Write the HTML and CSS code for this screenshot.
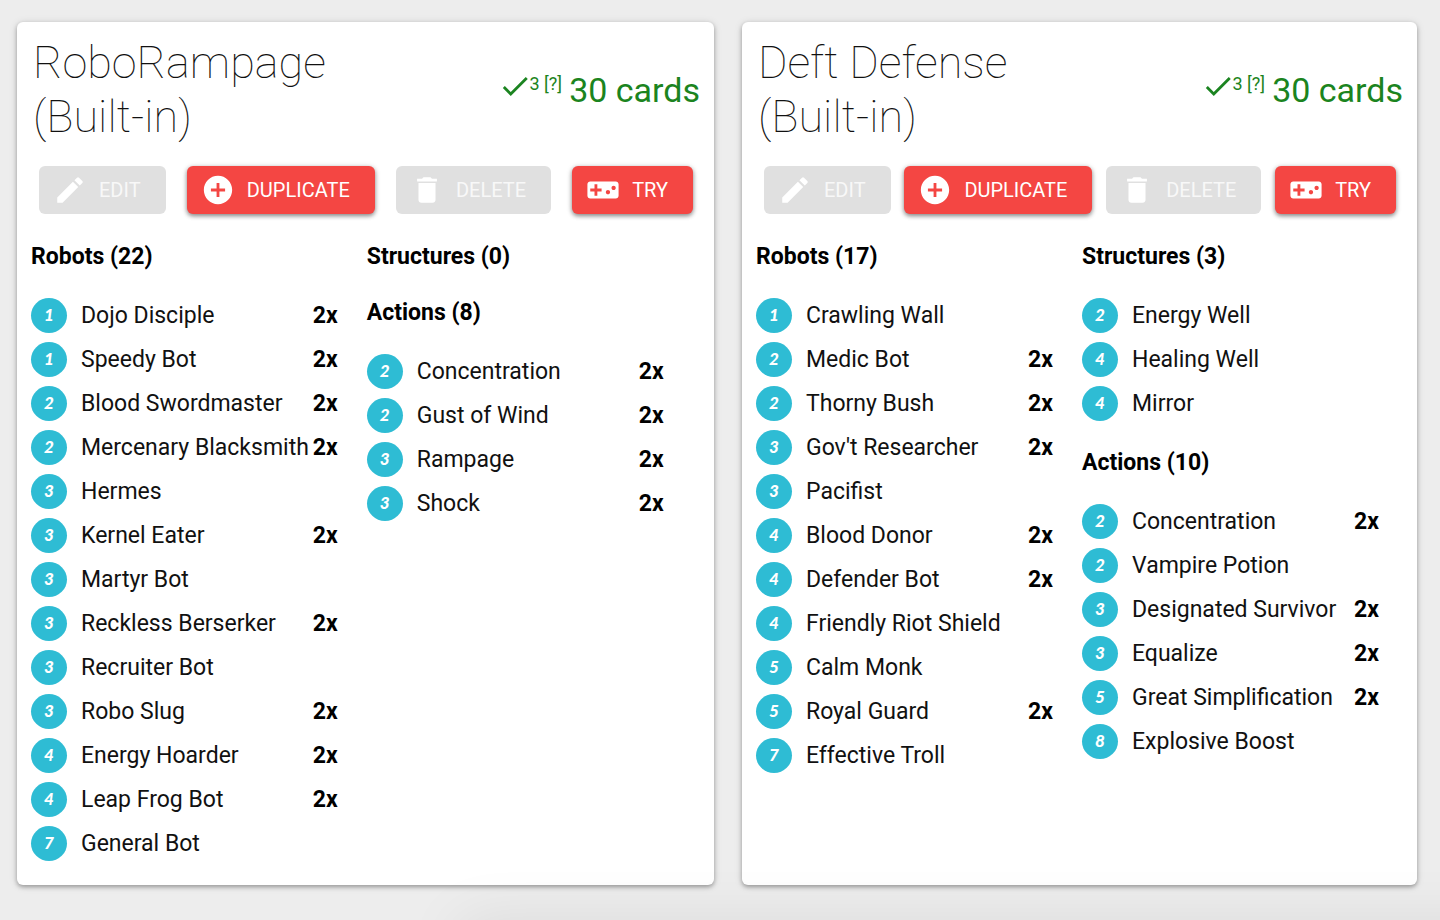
FILE: index.html
```
<!DOCTYPE html>
<html lang="en">
<head>
<meta charset="utf-8">
<title>Decks</title>
<link rel="stylesheet" href="styles.css">
</head>
<body>
<svg class="sprite" aria-hidden="true">
  <symbol id="i-edit" viewBox="0 0 24 24"><path d="M3 17.25V21h3.750L17.810 9.940l-3.750-3.750L3 17.250zM20.710 7.040a.996.996 0 0 0 0-1.410l-2.340-2.340a.996.996 0 0 0-1.410 0l-1.830 1.830 3.750 3.750 1.830-1.830z"/></symbol>
  <symbol id="i-add" viewBox="0 0 24 24"><path d="M12 2C6.480 2 2 6.480 2 12s4.480 10 10 10 10-4.480 10-10S17.520 2 12 2zm5 11h-4v4h-2v-4H7v-2h4V7h2v4h4v2z"/></symbol>
  <symbol id="i-delete" viewBox="0 0 24 24"><path d="M6 19c0 1.100.9 2 2 2h8c1.100 0 2-.9 2-2V7H6v12zM19 4h-3.500l-1-1h-5l-1 1H5v2h14V4z"/></symbol>
  <symbol id="i-game" viewBox="0 0 24 24"><path d="M21 6H3c-1.100 0-2 .9-2 2v8c0 1.100.9 2 2 2h18c1.100 0 2-.9 2-2V8c0-1.100-.9-2-2-2zm-10 7H8v3H6v-3H3v-2h3V8h2v3h3v2zm4.500 2c-.83 0-1.500-.67-1.500-1.500s.67-1.500 1.500-1.500 1.500.67 1.500 1.500-.67 1.500-1.500 1.500zm4-3c-.83 0-1.500-.67-1.500-1.500S18.670 9 19.500 9s1.500.67 1.500 1.500-.67 1.500-1.500 1.500z"/></symbol>
  <symbol id="i-check" viewBox="0 0 24 24"><path d="M9 16.170L4.830 12l-1.420 1.410L9 19 21 7l-1.410-1.410z"/></symbol>
</svg>
<main class="decks">
  <article class="deck">
    <header class="deck-head">
      <h2 class="deck-title">RoboRampage (Built-in)</h2>
      <div class="deck-status"><svg class="check"><use href="#i-check"/></svg><span class="formats">3 [?]</span><span class="total">30 cards</span></div>
    </header>
    <div class="actions">
      <button class="btn" type="button" disabled><svg class="icon"><use href="#i-edit"/></svg>EDIT</button>
      <button class="btn" type="button"><svg class="icon"><use href="#i-add"/></svg>DUPLICATE</button>
      <button class="btn" type="button" disabled><svg class="icon"><use href="#i-delete"/></svg>DELETE</button>
      <button class="btn" type="button"><svg class="icon"><use href="#i-game"/></svg>TRY</button>
    </div>
    <div class="columns">
      <div class="column">
        <section class="group">
          <h3 class="group-title">Robots (22)</h3>
          <table class="cards">
            <tr><td class="cost"><span class="badge">1</span></td><td class="name">Dojo Disciple</td><td class="count">2x</td></tr>
            <tr><td class="cost"><span class="badge">1</span></td><td class="name">Speedy Bot</td><td class="count">2x</td></tr>
            <tr><td class="cost"><span class="badge">2</span></td><td class="name">Blood Swordmaster</td><td class="count">2x</td></tr>
            <tr><td class="cost"><span class="badge">2</span></td><td class="name">Mercenary Blacksmith</td><td class="count">2x</td></tr>
            <tr><td class="cost"><span class="badge">3</span></td><td class="name">Hermes</td><td class="count"></td></tr>
            <tr><td class="cost"><span class="badge">3</span></td><td class="name">Kernel Eater</td><td class="count">2x</td></tr>
            <tr><td class="cost"><span class="badge">3</span></td><td class="name">Martyr Bot</td><td class="count"></td></tr>
            <tr><td class="cost"><span class="badge">3</span></td><td class="name">Reckless Berserker</td><td class="count">2x</td></tr>
            <tr><td class="cost"><span class="badge">3</span></td><td class="name">Recruiter Bot</td><td class="count"></td></tr>
            <tr><td class="cost"><span class="badge">3</span></td><td class="name">Robo Slug</td><td class="count">2x</td></tr>
            <tr><td class="cost"><span class="badge">4</span></td><td class="name">Energy Hoarder</td><td class="count">2x</td></tr>
            <tr><td class="cost"><span class="badge">4</span></td><td class="name">Leap Frog Bot</td><td class="count">2x</td></tr>
            <tr><td class="cost"><span class="badge">7</span></td><td class="name">General Bot</td><td class="count"></td></tr>
          </table>
        </section>
      </div>
      <div class="column">
        <section class="group group-empty">
          <h3 class="group-title">Structures (0)</h3>
        </section>
        <section class="group">
          <h3 class="group-title">Actions (8)</h3>
          <table class="cards">
            <tr><td class="cost"><span class="badge">2</span></td><td class="name">Concentration</td><td class="count">2x</td></tr>
            <tr><td class="cost"><span class="badge">2</span></td><td class="name">Gust of Wind</td><td class="count">2x</td></tr>
            <tr><td class="cost"><span class="badge">3</span></td><td class="name">Rampage</td><td class="count">2x</td></tr>
            <tr><td class="cost"><span class="badge">3</span></td><td class="name">Shock</td><td class="count">2x</td></tr>
          </table>
        </section>
      </div>
    </div>
  </article>
  <article class="deck">
    <header class="deck-head">
      <h2 class="deck-title">Deft Defense (Built-in)</h2>
      <div class="deck-status"><svg class="check"><use href="#i-check"/></svg><span class="formats">3 [?]</span><span class="total">30 cards</span></div>
    </header>
    <div class="actions">
      <button class="btn" type="button" disabled><svg class="icon"><use href="#i-edit"/></svg>EDIT</button>
      <button class="btn" type="button"><svg class="icon"><use href="#i-add"/></svg>DUPLICATE</button>
      <button class="btn" type="button" disabled><svg class="icon"><use href="#i-delete"/></svg>DELETE</button>
      <button class="btn" type="button"><svg class="icon"><use href="#i-game"/></svg>TRY</button>
    </div>
    <div class="columns">
      <div class="column">
        <section class="group">
          <h3 class="group-title">Robots (17)</h3>
          <table class="cards">
            <tr><td class="cost"><span class="badge">1</span></td><td class="name">Crawling Wall</td><td class="count"></td></tr>
            <tr><td class="cost"><span class="badge">2</span></td><td class="name">Medic Bot</td><td class="count">2x</td></tr>
            <tr><td class="cost"><span class="badge">2</span></td><td class="name">Thorny Bush</td><td class="count">2x</td></tr>
            <tr><td class="cost"><span class="badge">3</span></td><td class="name">Gov't Researcher</td><td class="count">2x</td></tr>
            <tr><td class="cost"><span class="badge">3</span></td><td class="name">Pacifist</td><td class="count"></td></tr>
            <tr><td class="cost"><span class="badge">4</span></td><td class="name">Blood Donor</td><td class="count">2x</td></tr>
            <tr><td class="cost"><span class="badge">4</span></td><td class="name">Defender Bot</td><td class="count">2x</td></tr>
            <tr><td class="cost"><span class="badge">4</span></td><td class="name">Friendly Riot Shield</td><td class="count"></td></tr>
            <tr><td class="cost"><span class="badge">5</span></td><td class="name">Calm Monk</td><td class="count"></td></tr>
            <tr><td class="cost"><span class="badge">5</span></td><td class="name">Royal Guard</td><td class="count">2x</td></tr>
            <tr><td class="cost"><span class="badge">7</span></td><td class="name">Effective Troll</td><td class="count"></td></tr>
          </table>
        </section>
      </div>
      <div class="column">
        <section class="group">
          <h3 class="group-title">Structures (3)</h3>
          <table class="cards">
            <tr><td class="cost"><span class="badge">2</span></td><td class="name">Energy Well</td><td class="count"></td></tr>
            <tr><td class="cost"><span class="badge">4</span></td><td class="name">Healing Well</td><td class="count"></td></tr>
            <tr><td class="cost"><span class="badge">4</span></td><td class="name">Mirror</td><td class="count"></td></tr>
          </table>
        </section>
        <section class="group">
          <h3 class="group-title">Actions (10)</h3>
          <table class="cards">
            <tr><td class="cost"><span class="badge">2</span></td><td class="name">Concentration</td><td class="count">2x</td></tr>
            <tr><td class="cost"><span class="badge">2</span></td><td class="name">Vampire Potion</td><td class="count"></td></tr>
            <tr><td class="cost"><span class="badge">3</span></td><td class="name">Designated Survivor</td><td class="count">2x</td></tr>
            <tr><td class="cost"><span class="badge">3</span></td><td class="name">Equalize</td><td class="count">2x</td></tr>
            <tr><td class="cost"><span class="badge">5</span></td><td class="name">Great Simplification</td><td class="count">2x</td></tr>
            <tr><td class="cost"><span class="badge">8</span></td><td class="name">Explosive Boost</td><td class="count"></td></tr>
          </table>
        </section>
      </div>
    </div>
  </article>
</main>
</body>
</html>
```
FILE: styles.css
```
* { box-sizing: border-box; }
body {
  margin: 0;
  min-height: 100vh;
  background: #ededed;
  color: #111;
  font-family: Roboto, "Liberation Sans", sans-serif;
  font-size: 23px;
}
/* soft shade rising from below the window's bottom edge */
body::after {
  content: "";
  position: fixed;
  top: 100%;
  left: 460px;
  right: -80px;
  height: 80px;
  box-shadow: 0 0 60px rgba(0, 0, 0, .08);
  pointer-events: none;
}
.sprite { position: absolute; width: 0; height: 0; }
.decks {
  display: grid;
  grid-template-columns: 697fr 675fr;
  gap: 28px;
  padding: 22px 23px 35px 17px;
}
.deck {
  padding: 14px 14px 20px;
  background: #fff;
  border-radius: 6px;
  box-shadow: 0 2px 4px rgba(0, 0, 0, .3), 0 1px 8px rgba(0, 0, 0, .12);
}
.deck-head {
  display: flex;
  justify-content: space-between;
  align-items: center;
}
.deck-title {
  max-width: 320px;
  margin: 0;
  padding-left: 2px;
  font-size: 45px;
  font-weight: 100;
  line-height: 54px;
}
.deck-status {
  display: flex;
  align-items: center;
  color: #1b8420;
  line-height: 40px;
}
.check { width: 34px; height: 34px; margin: 0 -3px 8px 0; fill: currentColor; }
.formats { margin: 0 7px 12px 0; font-size: 18px; line-height: 20px; }
.total { font-size: 34px; }
.actions {
  display: flex;
  justify-content: space-between;
  margin: 22px 7px 30px 8px;
}
.btn {
  display: flex;
  align-items: center;
  gap: 12px;
  height: 48px;
  padding: 0 25px 0 14px;
  border: 0;
  border-radius: 6px;
  background: #f44643;
  color: #fff;
  font: 400 20px/24px Roboto, sans-serif;
  box-shadow: 0 2px 4px rgba(0, 0, 0, .4), 0 1px 6px rgba(0, 0, 0, .15);
}
.btn:disabled { background: #e0e0e0; color: #f8f8f8; box-shadow: none; }
.icon { width: 34px; height: 34px; fill: #fff; }
.columns { display: flex; gap: 29px; }
.column { min-width: 297px; }
.group + .group { margin-top: 25px; }
.group-empty + .group { margin-top: 30px; }
.group-title {
  margin: 0 0 23px;
  font-size: 23px;
  font-weight: 700;
  line-height: 26px;
  color: #000;
}
.cards { width: 100%; border-collapse: collapse; line-height: 26px; }
.cards td { height: 44px; padding: 0; white-space: nowrap; }
.cards .cost { width: 50px; }
.cards .name { padding-top: 1px; }
.badge {
  display: block;
  width: 36px;
  height: 35px;
  border-radius: 50%;
  background: #2ebcd4;
  color: #fff;
  font: italic 900 17px/34px Lato, sans-serif;
  text-align: center;
}
.cards .count { padding: 1px 0 0 4px; text-align: right; font-weight: 700; color: #000; }
```
